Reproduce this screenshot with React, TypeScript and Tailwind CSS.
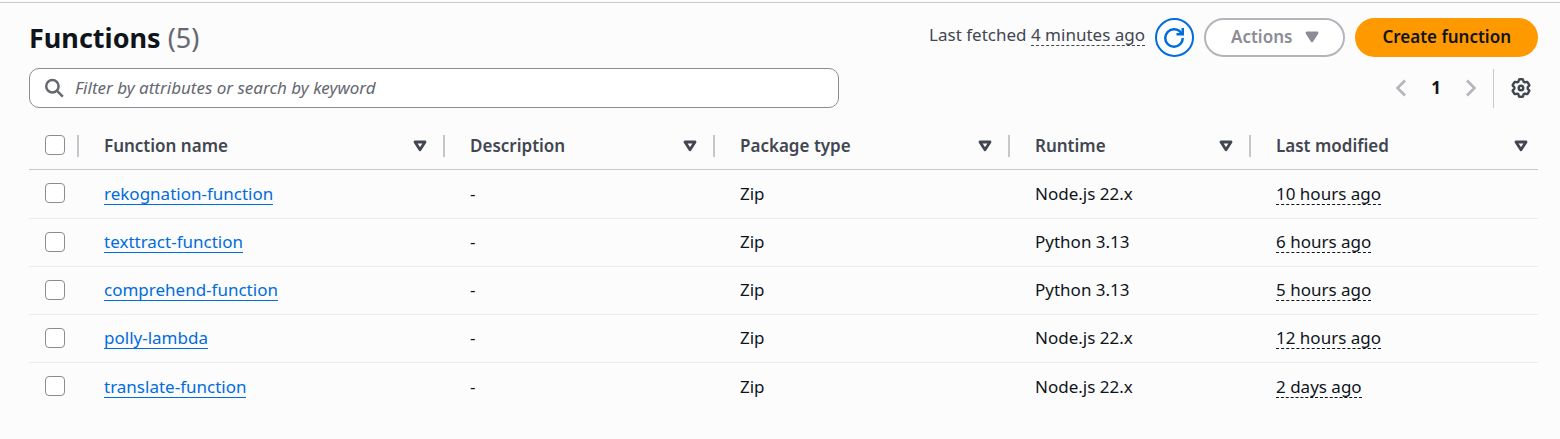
import React from "react";

type LambdaFunction = {
  name: string;
  packageType: string;
  runtime: string;
  modified: string;
};

const functions: LambdaFunction[] = [
  { name: "rekognation-function", packageType: "Zip", runtime: "Node.js 22.x", modified: "10 hours ago" },
  { name: "texttract-function", packageType: "Zip", runtime: "Python 3.13", modified: "6 hours ago" },
  { name: "comprehend-function", packageType: "Zip", runtime: "Python 3.13", modified: "5 hours ago" },
  { name: "polly-lambda", packageType: "Zip", runtime: "Node.js 22.x", modified: "12 hours ago" },
  { name: "translate-function", packageType: "Zip", runtime: "Node.js 22.x", modified: "2 days ago" },
];

const columns = ["Function name", "Description", "Package type", "Runtime", "Last modified"];

function SearchIcon() {
  return (
    <svg viewBox="0 0 20 20" className="size-5 shrink-0" fill="none" stroke="#656871" strokeWidth="2.5" aria-hidden="true">
      <circle cx="8.4" cy="8.2" r="6.2" />
      <path d="M12.8 12.6l6 6" />
    </svg>
  );
}

function RefreshIcon() {
  return (
    <svg viewBox="0 0 16 16" className="size-5" fill="none" stroke="currentColor" strokeWidth="2" aria-hidden="true">
      <path d="M10 5h5V0" />
      <path d="M15 8a6.957 6.957 0 0 1-7 7 6.957 6.957 0 0 1-7-7 6.957 6.957 0 0 1 7-7 6.87 6.87 0 0 1 6.3 4" />
    </svg>
  );
}

function GearIcon() {
  return (
    <svg viewBox="0 0 20 20" className="size-5" fill="none" stroke="currentColor" strokeWidth="2.4" strokeLinejoin="round" aria-hidden="true">
      <path d="M8.6 1.2h2.8q.7 0 .8.7l.4 1.8 1.2.7 1.9-.5q.7-.2 1 .4l1.500 2.500q.3.600-.2 1.100L16.700 9.200v1.600l1.300 1.300q.5.500.2 1.100l-1.500 2.500q-.3.600-1 .4l-1.900-.5-1.200.7-.4 1.800q-.1.700-.8.700H8.600q-.7 0-.8-.7l-.4-1.800-1.200-.7-1.900.5q-.7.200-1-.4l-1.500-2.500q-.3-.600.2-1.100l1.300-1.300V9.200L2 7.900q-.5-.5-.2-1.100l1.500-2.500q.3-.600 1-.4l1.900.5 1.200-.7.4-1.800q.1-.7.8-.7z" />
      <circle cx="10" cy="10" r="2.3" />
    </svg>
  );
}

function CaretIcon({ filled = false }: { filled?: boolean }) {
  return (
    <svg viewBox="0 0 20 20" className="size-5" fill={filled ? "currentColor" : "none"} stroke="currentColor" strokeWidth="2.8" strokeLinejoin="round" aria-hidden="true">
      <path d="M5 6h10l-5 7.800z" />
    </svg>
  );
}

function Checkbox({ label }: { label: string }) {
  return (
    <input
      type="checkbox"
      aria-label={label}
      className="block size-5 appearance-none rounded-[4px] border border-[#8c8c94] bg-white checked:bg-[#006ce0]"
    />
  );
}

export default function App() {
  return (
    <main className="min-h-screen bg-[#fcfcfd] pt-[2px] font-['Noto_Sans',sans-serif] text-[17px] leading-[20px] text-[#0f141a]">
      <div className="border-t border-[#c6c6cd] pr-[22px] pl-[29px]">
        <header className="flex items-start justify-between pt-[15px]">
          <h1 className="text-[27px] leading-[40px] font-bold">
            Functions <span className="font-normal text-[#656871]">(5)</span>
          </h1>
          <div className="flex items-start gap-[10px]">
            <p className="pt-[7px] text-[#424650]">
              Last fetched{" "}
              <span className="inline-block border-b border-dashed border-[#424650]">4 minutes ago</span>
            </p>
            <button
              type="button"
              aria-label="Refresh"
              className="flex size-[39px] items-center justify-center rounded-full border-2 border-[#006ce0] bg-white text-[#006ce0]"
            >
              <RefreshIcon />
            </button>
            <button
              type="button"
              disabled
              className="flex h-[39px] items-center gap-[10px] rounded-full border-2 border-[#b4b4bb] bg-white pr-[21px] pb-px pl-[25px] font-semibold text-[#8c8c94]"
            >
              Actions
              <CaretIcon filled />
            </button>
            <button type="button" className="h-[39px] rounded-full bg-[#ff9900] px-[27px] pb-px font-semibold">
              Create function
            </button>
          </div>
        </header>

        <div className="mt-[10px] flex items-center justify-between">
          <label className="flex h-10 w-full max-w-[810px] items-center gap-[11px] rounded-[10px] border border-[#8c8c94] bg-white px-[14px]">
            <SearchIcon />
            <input
              type="search"
              aria-label="Filter functions"
              placeholder="Filter by attributes or search by keyword"
              className="min-w-0 flex-1 bg-transparent outline-none placeholder:text-[#656871] placeholder:italic"
            />
          </label>
          <div className="flex h-10 items-center">
            <nav aria-label="Pagination" className="flex items-center">
              <button type="button" aria-label="Previous page" className="text-[#b4b4bb]">
                <svg viewBox="0 0 20 20" className="size-5" fill="none" stroke="currentColor" strokeWidth="2.6" aria-hidden="true">
                  <path d="M14 2.500l-7.500 7.500 7.500 7.500" />
                </svg>
              </button>
              <button type="button" className="w-[50px] font-bold">1</button>
              <button type="button" aria-label="Next page" className="text-[#b4b4bb]">
                <svg viewBox="0 0 20 20" className="size-5" fill="none" stroke="currentColor" strokeWidth="2.6" aria-hidden="true">
                  <path d="M6 2.500l7.500 7.500-7.500 7.500" />
                </svg>
              </button>
            </nav>
            <button
              type="button"
              aria-label="Preferences"
              className="ml-3 flex h-[39px] items-center border-l border-[#c6c6cd] pr-[7px] pl-[17px] text-[#424650]"
            >
              <GearIcon />
            </button>
          </div>
        </div>

        <table className="mt-[14px] w-full table-fixed border-separate border-spacing-0 text-left">
          <colgroup>
            <col className="w-[50px]" />
            <col className="w-[366px]" />
            <col className="w-[270px]" />
            <col className="w-[295px]" />
            <col className="w-[241px]" />
            <col />
          </colgroup>
          <thead>
            <tr className="h-12 text-[#424650]">
              <th className="border-b border-[#c6c6cd] p-0">
                <div className="flex h-[22px] items-start border-r-2 border-[#c6c6cd] pl-4">
                  <Checkbox label="Select all functions" />
                </div>
              </th>
              {columns.map((column) => (
                <th key={column} scope="col" className="group border-b border-[#c6c6cd] p-0">
                  <div className="flex h-[22px] items-center justify-between border-r-2 border-[#c6c6cd] pr-[13px] pl-[25px] group-last:border-r-0 group-last:pr-[7px]">
                    <span className="font-semibold">{column}</span>
                    <button type="button" aria-label={`Sort by ${column}`}>
                      <CaretIcon />
                    </button>
                  </div>
                </th>
              ))}
            </tr>
          </thead>
          <tbody>
            {functions.map((fn) => (
              <tr key={fn.name} className="h-12 *:border-b *:border-[#ebebf0] *:p-0 first:h-[49px] last:*:border-b-0">
                <td>
                  <div className="pb-[2px] pl-4">
                    <Checkbox label={`Select ${fn.name}`} />
                  </div>
                </td>
                <td>
                  <div className="flex pl-[25px]">
                    <a href="#" className="border-b border-[#006ce0] text-[#006ce0]">{fn.name}</a>
                  </div>
                </td>
                <td><div className="pb-px pl-[25px]">-</div></td>
                <td><div className="pb-px pl-[25px]">{fn.packageType}</div></td>
                <td><div className="pb-px pl-[25px]">{fn.runtime}</div></td>
                <td>
                  <div className="flex pl-[25px]">
                    <span className="border-b border-dashed border-[#0f141a]">{fn.modified}</span>
                  </div>
                </td>
              </tr>
            ))}
          </tbody>
        </table>
      </div>
    </main>
  );
}
